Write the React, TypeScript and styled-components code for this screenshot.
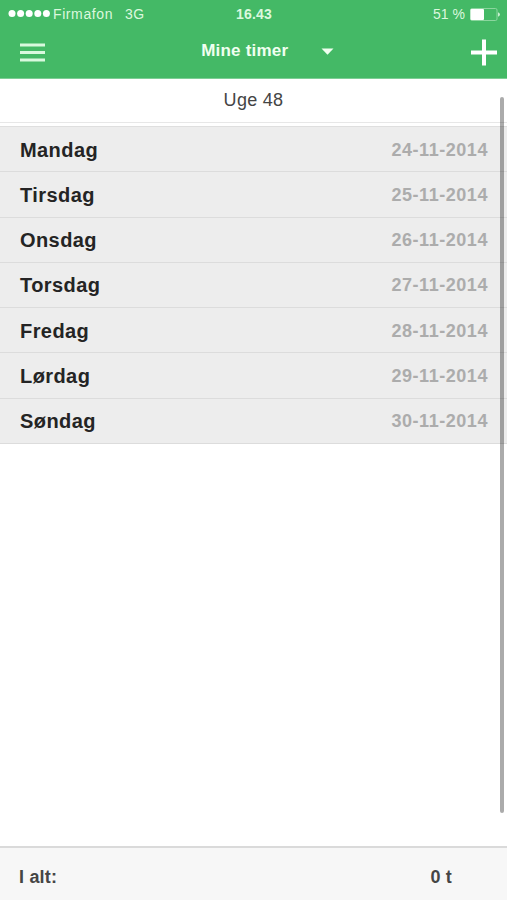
import React from 'react';
import styled, { createGlobalStyle } from 'styled-components';

const GlobalStyle = createGlobalStyle`
  * { box-sizing: border-box; }
  body { margin: 0; background: #fff; }
`;

const Screen = styled.main`
  position: relative;
  display: flex;
  flex-direction: column;
  width: 507px;
  height: 900px;
  overflow: hidden;
  background: #fff;
  font-family: "Liberation Sans", Arial, sans-serif;
`;

const Header = styled.header`
  flex: none;
  height: 79px;
  background: #44b966;
  border-bottom: 1px solid #7dce95;
  color: #f0fff0;
`;

const StatusBar = styled.div`
  display: grid;
  grid-template-columns: 1fr auto 1fr;
  align-items: center;
  height: 27px;
  padding: 0 7px 0 8px;
  font-size: 14px;
  line-height: 28px;
  color: #dcf8de;
`;

const Carrier = styled.div`
  display: flex;
  align-items: center;
`;

const Signal = styled.svg`
  width: 42px;
  height: 8px;
  margin-right: 3px;
  fill: #fff;
`;

const CarrierName = styled.span`
  letter-spacing: 0.6px;
`;

const Network = styled.span`
  margin-left: 12px;
  letter-spacing: 0.3px;
`;

const Clock = styled.span`
  font-weight: bold;
  letter-spacing: 0.15px;
`;

const Power = styled.div`
  display: flex;
  justify-content: flex-end;
  align-items: center;
  gap: 5px;
`;

const Battery = styled.svg`
  width: 30px;
  height: 13px;
`;

const NavBar = styled.nav`
  display: grid;
  grid-template-columns: 1fr auto 1fr;
  align-items: center;
  height: 51px;
  padding: 0 10px 0 20px;
`;

const IconButton = styled.button<{ $end?: boolean }>`
  display: flex;
  justify-self: ${({ $end }) => ($end ? 'end' : 'start')};
  padding: 0;
  border: 0;
  background: none;
`;

const TitleButton = styled.button`
  display: flex;
  align-items: center;
  gap: 32.5px;
  height: 24px;
  margin: 0 0 3px 18px;
  padding: 0;
  border: 0;
  background: none;
  color: #f0fff0;
  font: bold 17px/24px "Liberation Sans", Arial, sans-serif;
  letter-spacing: 0.2px;
`;

const Week = styled.div`
  flex: none;
  height: 44px;
  border-bottom: 1px solid #e7e7e7;
  color: #444;
  font-size: 18px;
  line-height: 43px;
  letter-spacing: 0.3px;
  text-align: center;
`;

const Days = styled.ul`
  flex: none;
  display: grid;
  grid-template-rows: repeat(7, 1fr);
  height: 318px;
  margin: 3px 0 0;
  padding: 0;
  list-style: none;
  background: #ededed;
  border-top: 1px solid #dfdfdf;
`;

const Day = styled.li`
  display: flex;
  align-items: center;
  justify-content: space-between;
  padding: 0 19px 0 20px;
  border-bottom: 1px solid #dcdcdc;
`;

const DayName = styled.span`
  color: #242424;
  font-size: 20px;
  font-weight: bold;
  line-height: 24px;
  letter-spacing: 0.42px;
  margin-top: 1px;
`;

const DayDate = styled.time`
  color: #acacac;
  font-size: 18px;
  font-weight: bold;
  line-height: 24px;
  letter-spacing: 0.55px;
  margin-top: 1px;
`;

const Total = styled.footer`
  display: flex;
  flex: none;
  justify-content: space-between;
  height: 54px;
  margin-top: auto;
  padding: 0 55px 0 19px;
  background: #f7f7f7;
  border-top: 2px solid #dadada;
  color: #454545;
  font-size: 18px;
  font-weight: bold;
  line-height: 59px;
  letter-spacing: 0.2px;
`;

const ScrollThumb = styled.div`
  position: absolute;
  top: 97px;
  right: 3px;
  width: 4px;
  height: 716px;
  border-radius: 2px;
  background: rgba(0, 0, 0, 0.33);
`;

const days = [
  ['Mandag', '24-11-2014'],
  ['Tirsdag', '25-11-2014'],
  ['Onsdag', '26-11-2014'],
  ['Torsdag', '27-11-2014'],
  ['Fredag', '28-11-2014'],
  ['Lørdag', '29-11-2014'],
  ['Søndag', '30-11-2014'],
];

export default function App() {
  return (
    <>
      <GlobalStyle />
      <Screen>
        <Header>
          <StatusBar>
            <Carrier>
              <Signal viewBox="0 0 42 8">
                {[4, 12.6, 21.2, 29.8, 38.4].map((x) => (
                  <circle key={x} cx={x} cy="3.5" r="3.5" />
                ))}
              </Signal>
              <CarrierName>Firmafon</CarrierName>
              <Network>3G</Network>
            </Carrier>
            <Clock>16.43</Clock>
            <Power>
              <span>51 %</span>
              <Battery viewBox="0 0 30 13">
                <rect x="0.5" y="0.5" width="26.5" height="12" rx="1.5" fill="none" stroke="#8bd69e" />
                <rect x="0.5" y="1" width="13.5" height="11" rx="1" fill="#fff" />
                <path d="M28 4.2Q30 5 30 6.5T28 8.8Z" fill="#c8f0d0" />
              </Battery>
            </Power>
          </StatusBar>
          <NavBar>
            <IconButton aria-label="Menu">
              <svg width="25" height="19" viewBox="0 0 25 19" fill="#d9f9de">
                <rect y="0.5" width="25" height="3" />
                <rect y="8" width="25" height="3" />
                <rect y="15.5" width="25" height="3" />
              </svg>
            </IconButton>
            <TitleButton>
              <span>Mine timer</span>
              <svg width="13" height="7" viewBox="0 0 13 7" fill="#f0fff0">
                <path d="M0.5 0.5H12.5L6.5 6.8Z" />
              </svg>
            </TitleButton>
            <IconButton $end aria-label="Tilføj">
              <svg width="26" height="27" viewBox="0 0 26 27" fill="#fff">
                <path d="M11 0.5H15V11.5H26V15.5H15V26.5H11V15.5H0V11.5H11Z" />
              </svg>
            </IconButton>
          </NavBar>
        </Header>
        <Week>Uge 48</Week>
        <Days>
          {days.map(([name, date]) => (
            <Day key={name}>
              <DayName>{name}</DayName>
              <DayDate>{date}</DayDate>
            </Day>
          ))}
        </Days>
        <Total>
          <span>I alt:</span>
          <span>0 t</span>
        </Total>
        <ScrollThumb />
      </Screen>
    </>
  );
}
